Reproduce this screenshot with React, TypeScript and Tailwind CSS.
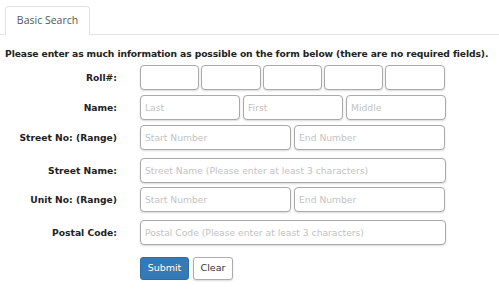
const labelCls = 'w-[117px] shrink-0 text-right text-[9.2px] font-bold text-[#222]';

const inputCls =
  'h-[25px] rounded-[4px] border border-[#a9a9a9] bg-white px-[4px] text-[9.2px] text-[#333] placeholder:text-[#c2c2c2] shadow-[0_1px_2px_rgba(0,0,0,0.15)] outline-none';

function Row({ label, children, top }: { label: string; children: React.ReactNode; top: string }) {
  return (
    <div className={`flex items-start ${top}`}>
      <div className={`${labelCls} pt-[6px]`}>{label}</div>
      <div className="ml-[23px] flex">{children}</div>
    </div>
  );
}

export default function App() {
  return (
    <div className="h-[302px] w-[499px] bg-white pt-[6px]" style={{ fontFamily: '"DejaVu Sans", Verdana, sans-serif' }}>
      {/* tabs */}
      <div className="flex border-b border-[#e3e3e3]">
        <div className="ml-[5px] -mb-px flex h-[29px] w-[85px] items-center justify-center rounded-t-[4px] border border-b-white border-[#e0e0e0] bg-white text-[10.5px] text-[#555]" style={{ fontFamily: '"Open Sans", sans-serif' }}>
          Basic Search
        </div>
      </div>

      <p className="mt-[13px] whitespace-nowrap pl-[5px] text-[9.2px] leading-[12px] font-bold text-[#222] tracking-[-0.1px]">
        Please enter as much information as possible on the form below (there are no required fields).
      </p>

      <form className="mt-[5px]" onSubmit={e => e.preventDefault()}>
        <Row label="Roll#:" top="">
          <div className="flex gap-[2px]">
            <input className={`${inputCls} w-[59px]`} />
            <input className={`${inputCls} w-[60px]`} />
            <input className={`${inputCls} w-[59px]`} />
            <input className={`${inputCls} w-[59px]`} />
            <input className={`${inputCls} w-[60px]`} />
          </div>
        </Row>
        <Row label="Name:" top="mt-[5px]">
          <div className="flex gap-[3px]">
            <input className={`${inputCls} w-[100px]`} placeholder="Last" />
            <input className={`${inputCls} w-[100px]`} placeholder="First" />
            <input className={`${inputCls} w-[100px]`} placeholder="Middle" />
          </div>
        </Row>
        <Row label="Street No: (Range)" top="mt-[5px]">
          <div className="flex gap-[3px]">
            <input className={`${inputCls} w-[151px]`} placeholder="Start Number" />
            <input className={`${inputCls} w-[151px]`} placeholder="End Number" />
          </div>
        </Row>
        <Row label="Street Name:" top="mt-[8px]">
          <input className={`${inputCls} w-[306px]`} placeholder="Street Name (Please enter at least 3 characters)" />
        </Row>
        <Row label="Unit No: (Range)" top="mt-[4px]">
          <div className="flex gap-[3px]">
            <input className={`${inputCls} w-[151px]`} placeholder="Start Number" />
            <input className={`${inputCls} w-[151px]`} placeholder="End Number" />
          </div>
        </Row>
        <Row label="Postal Code:" top="mt-[8px]">
          <input className={`${inputCls} w-[306px]`} placeholder="Postal Code (Please enter at least 3 characters)" />
        </Row>

        <div className="ml-[140px] mt-[12px] flex gap-[4px]">
          <button className="h-[23px] w-[49px] rounded-[3px] border border-[#2e6da4] bg-[#337ab7] text-[9.5px] text-white">
            Submit
          </button>
          <button className="h-[23px] w-[40px] rounded-[3px] border border-[#adadad] bg-white text-[9.5px] text-[#333] shadow-[0_1px_2px_rgba(0,0,0,0.15)]">
            Clear
          </button>
        </div>
      </form>
    </div>
  );
}
